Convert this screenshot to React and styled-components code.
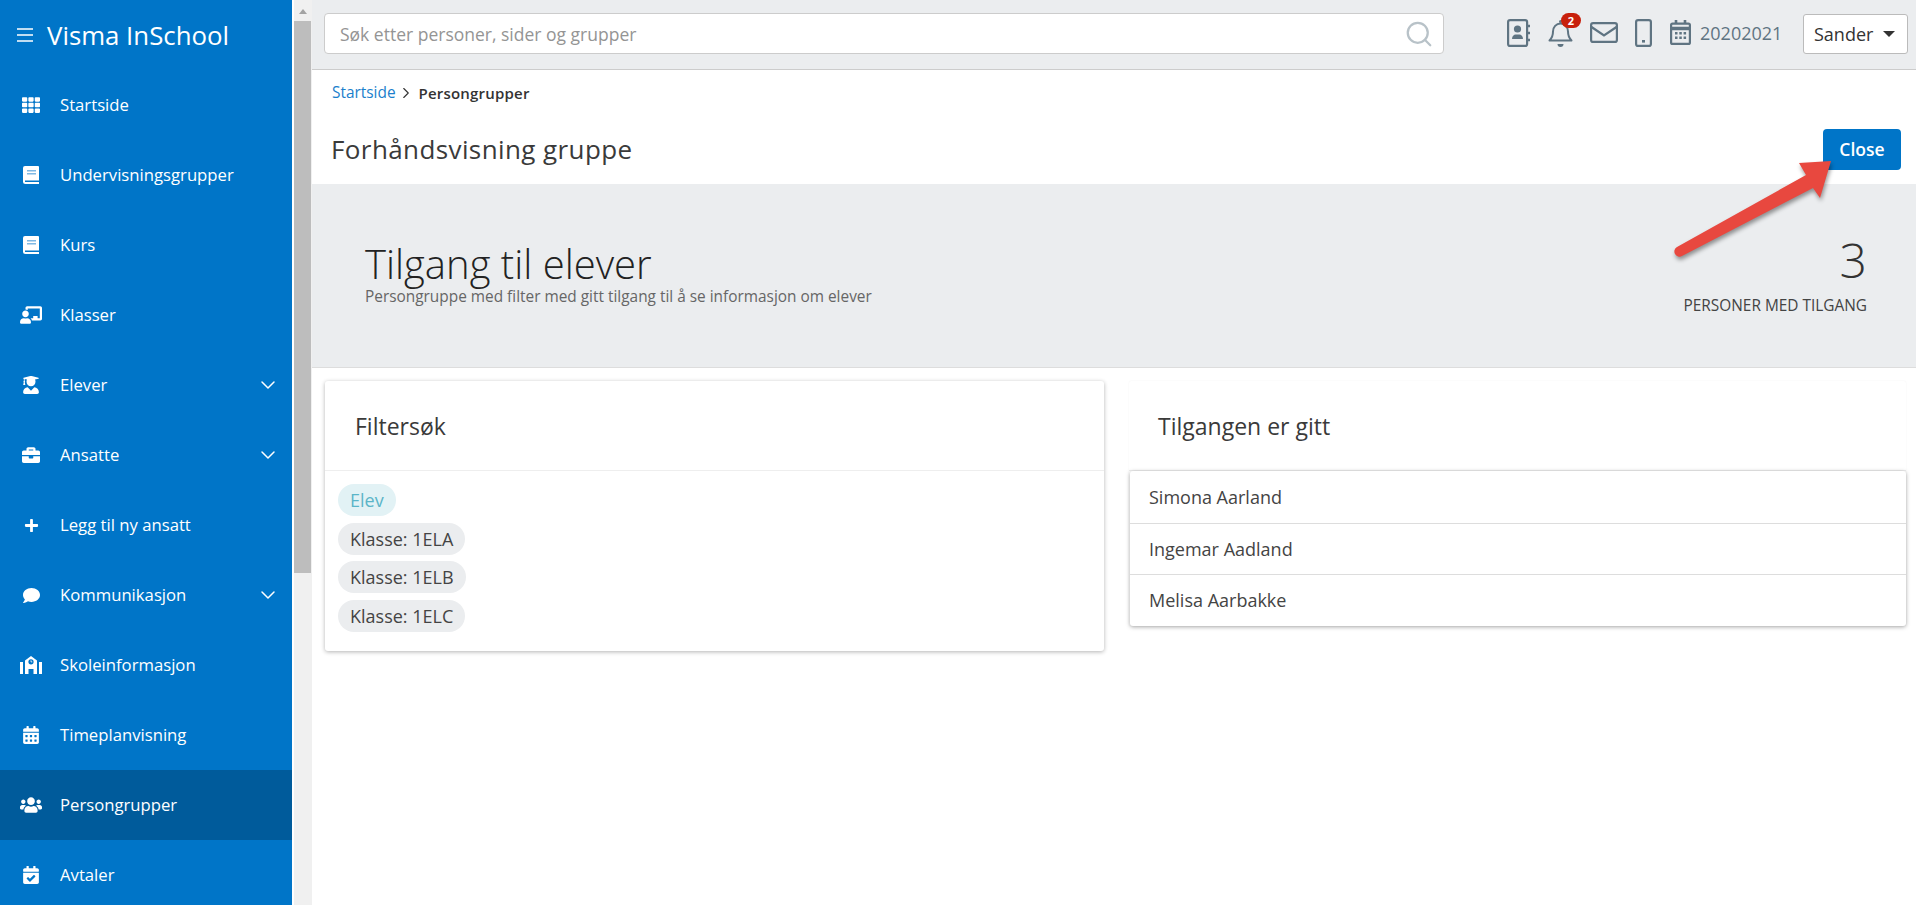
import React from "react";
import styled, { createGlobalStyle } from "styled-components";
import {
  FaTh,
  FaChalkboardTeacher,
  FaUserGraduate,
  FaBriefcase,
  FaPlus,
  FaComment,
  FaCalendarAlt,
  FaUsers,
  FaCalendarCheck,
} from "react-icons/fa";
import { ChevronDown, ChevronRight, Search } from "lucide-react";

const BookIcon = () => (
  <svg width="16" height="18" viewBox="0 0 16 18">
    <path fill="#fff" d="M2 0h13a1 1 0 0 1 1 1v17H2.500A2.500 2.500 0 0 1 0 15.500V2a2 2 0 0 1 2-2z" />
    <rect x="4" y="4" width="9" height="1.500" fill="#7fb8e3" />
    <rect x="4" y="7" width="9" height="1.500" fill="#7fb8e3" />
    <rect x="2" y="14.500" width="14" height="1.500" fill="#0075c8" />
  </svg>
);

const SchoolIcon = () => (
  <svg width="22" height="18" viewBox="0 0 22 18">
    <path fill="#fff" d="M0 6h3v12H0zM19 6h3v12h-3z" />
    <path
      fill="#fff"
      fillRule="evenodd"
      d="M11 0l6 4.500V18h-3.500v-5h-5v5H5V4.500zM11 3.200a2.600 2.600 0 1 0 0 5.200 2.600 2.600 0 0 0 0-5.200z"
    />
    <path stroke="#fff" strokeWidth="0.800" fill="none" d="M11 4.300v1.600h1.300" />
  </svg>
);

const HamburgerIcon = () => (
  <svg width="16" height="14" viewBox="0 0 16 14" stroke="#fff" strokeWidth="1.500">
    <path d="M0 1h16M0 7h16M0 13h16" />
  </svg>
);

const AddressBookIcon = () => (
  <svg width="24" height="28" viewBox="0 0 24 28" fill="none" stroke="#5f7482" strokeWidth="2.200">
    <rect x="1.100" y="1.100" width="19" height="25.800" rx="2" />
    <path d="M20 7h3M20 14h3M20 21h3" strokeWidth="2.400" />
    <circle cx="10.500" cy="10" r="3.600" fill="#5f7482" stroke="none" />
    <path fill="#5f7482" stroke="none" d="M5 20c0-3 2-4.500 3.500-4.500h4c1.500 0 3.500 1.500 3.500 4.500z" />
  </svg>
);

const BellIcon = () => (
  <svg width="25" height="28" viewBox="0 0 25 28" fill="none" stroke="#5f7482" strokeWidth="2">
    <path d="M1.500 21.500c2-2 3.500-3.500 3.500-9 0-4.500 3.200-8 7.500-8s7.500 3.500 7.500 8c0 5.500 1.500 7 3.500 9z" strokeLinejoin="round" />
    <path d="M9.500 25h6a3 3 0 0 1-6 0z" fill="#5f7482" stroke="none" />
    <rect x="11" y="1" width="3" height="3" rx="1.500" fill="#5f7482" stroke="none" />
  </svg>
);

const EnvelopeIcon = () => (
  <svg width="28" height="21" viewBox="0 0 28 21" fill="none" stroke="#5f7482" strokeWidth="2.200">
    <rect x="1.100" y="1.100" width="25.800" height="18.800" rx="2" />
    <path d="M1.500 5l12.500 8.500L26.500 5" />
  </svg>
);

const PhoneIcon = () => (
  <svg width="17" height="28" viewBox="0 0 17 28" fill="none" stroke="#5f7482" strokeWidth="2.200">
    <rect x="1.100" y="1.100" width="14.800" height="25.800" rx="2" />
    <rect x="7" y="21" width="3" height="2.600" fill="#5f7482" stroke="none" />
  </svg>
);

const CalendarIcon = () => (
  <svg width="21" height="25" viewBox="0 0 21 25" fill="none" stroke="#5f7482" strokeWidth="2.200">
    <rect x="1.100" y="3.600" width="18.800" height="20.300" rx="1.500" />
    <path d="M1 8.500h19" strokeWidth="3.500" />
    <path d="M6 0v4M15 0v4" strokeWidth="2.600" />
    <path
      fill="#5f7482"
      stroke="none"
      d="M5 12h2.500v2.500H5zM9.300 12h2.500v2.500H9.300zM13.600 12h2.500v2.500h-2.500zM5 16.500h2.500V19H5zM9.300 16.500h2.500V19H9.300zM13.600 16.500h2.500V19h-2.500z"
    />
  </svg>
);

const navItems = [
  { label: "Startside", icon: <FaTh size={18} /> },
  { label: "Undervisningsgrupper", icon: <BookIcon /> },
  { label: "Kurs", icon: <BookIcon /> },
  { label: "Klasser", icon: <FaChalkboardTeacher size={22} /> },
  { label: "Elever", icon: <FaUserGraduate size={18} />, expandable: true },
  { label: "Ansatte", icon: <FaBriefcase size={18} />, expandable: true },
  { label: "Legg til ny ansatt", icon: <FaPlus size={15} /> },
  { label: "Kommunikasjon", icon: <FaComment size={17} />, expandable: true },
  { label: "Skoleinformasjon", icon: <SchoolIcon /> },
  { label: "Timeplanvisning", icon: <FaCalendarAlt size={18} /> },
  { label: "Persongrupper", icon: <FaUsers size={22} />, active: true },
  { label: "Avtaler", icon: <FaCalendarCheck size={18} /> },
];

const filters = [
  { label: "Elev", info: true },
  { label: "Klasse: 1ELA" },
  { label: "Klasse: 1ELB" },
  { label: "Klasse: 1ELC" },
];

const people = ["Simona Aarland", "Ingemar Aadland", "Melisa Aarbakke"];

const App = () => {
  return (
    <Page>
      <GlobalStyle />
      <Sidebar>
        <Brand>
          <HamburgerIcon />
          <BrandName>Visma InSchool</BrandName>
        </Brand>
        {navItems.map((item) => (
          <NavItem key={item.label} $active={item.active}>
            <NavIcon>{item.icon}</NavIcon>
            <NavLabel>{item.label}</NavLabel>
            {item.expandable && <ChevronDown size={24} strokeWidth={1.5} />}
          </NavItem>
        ))}
      </Sidebar>
      <ScrollRail>
        <ScrollUp />
        <ScrollThumb />
      </ScrollRail>
      <Main>
        <TopBar>
          <SearchBox>
            <SearchText>Søk etter personer, sider og grupper</SearchText>
            <Search size={30} strokeWidth={1.8} color="#b8c2c8" />
          </SearchBox>
          <TopIcons>
            <AddressBookIcon />
            <BellWrap>
              <BellIcon />
              <Badge>2</Badge>
            </BellWrap>
            <EnvelopeIcon />
            <PhoneIcon />
            <YearBox>
              <CalendarIcon />
              <YearText>20202021</YearText>
            </YearBox>
          </TopIcons>
          <UserButton>
            Sander
            <Caret />
          </UserButton>
        </TopBar>
        <Breadcrumbs>
          <CrumbLink>Startside</CrumbLink>
          <ChevronRight size={18} strokeWidth={1.5} color="#333" />
          <CrumbCurrent>Persongrupper</CrumbCurrent>
        </Breadcrumbs>
        <TitleRow>
          <PageTitle>Forhåndsvisning gruppe</PageTitle>
          <CloseButton>Close</CloseButton>
        </TitleRow>
        <Hero>
          <HeroHeading>
            <HeroTitle>Tilgang til elever</HeroTitle>
            <HeroText>Persongruppe med filter med gitt tilgang til å se informasjon om elever</HeroText>
          </HeroHeading>
          <HeroStat>
            <StatNumber>3</StatNumber>
            <StatLabel>PERSONER MED TILGANG</StatLabel>
          </HeroStat>
        </Hero>
        <Cards>
          <Card>
            <CardHeader $inset={30}>Filtersøk</CardHeader>
            <Chips>
              {filters.map((f) => (
                <Chip key={f.label} $info={f.info}>
                  {f.label}
                </Chip>
              ))}
            </Chips>
          </Card>
          <AccessCard>
            <CardHeader $inset={29}>Tilgangen er gitt</CardHeader>
            <PeopleList>
              {people.map((name) => (
                <Person key={name}>{name}</Person>
              ))}
            </PeopleList>
          </AccessCard>
        </Cards>
        <Arrow width="180" height="115" viewBox="0 0 180 115">
          <path
            fill="#e8483f"
            d="M171 11L139 13 146 25 17 97a5 5 0 0 0 5 9L153 38 160 48z"
            filter="drop-shadow(1px 3px 2px rgba(0,0,0,.4))"
          />
        </Arrow>
      </Main>
    </Page>
  );
};

export default App;

const GlobalStyle = createGlobalStyle`
  html, body {
    margin: 0;
    height: 100%;
    overflow: hidden;
    background: #fff;
    font-family: "Open Sans", sans-serif;
    color: #333;
  }
`;

const Page = styled.div`
  display: flex;
  height: 905px;
  overflow: hidden;
`;

const Sidebar = styled.nav`
  width: 292px;
  flex: none;
  background: #0075c8;
  color: #fff;
`;

const Brand = styled.div`
  display: flex;
  align-items: center;
  gap: 14px;
  height: 70px;
  padding-left: 17px;
`;

const BrandName = styled.span`
  font-size: 25.800px;
  font-weight: 500;
`;

const NavItem = styled.div`
  display: flex;
  align-items: center;
  height: 70px;
  padding-right: 12px;
  background: ${(p) => (p.$active ? "#005b9b" : "transparent")};
`;

const NavIcon = styled.span`
  display: flex;
  justify-content: center;
  width: 62px;
  flex: none;
  margin-right: -2px;
`;

const NavLabel = styled.span`
  flex: 1;
  margin-bottom: 2px;
  font-size: 16.700px;
  font-weight: 500;
`;

const ScrollRail = styled.div`
  width: 18px;
  flex: none;
  margin-left: 2px;
  background: #f0f0f0;
`;

const ScrollUp = styled.div`
  width: 0;
  height: 0;
  margin: 9px auto 0;
  border-left: 4px solid transparent;
  border-right: 4px solid transparent;
  border-bottom: 5px solid #a3a3a3;
`;

const ScrollThumb = styled.div`
  height: 552px;
  margin-top: 7px;
  background: #bdbdbd;
  width: 17px;
`;

const Main = styled.main`
  flex: 1;
  min-width: 0;
  position: relative;
`;

const TopBar = styled.header`
  display: flex;
  align-items: center;
  height: 69px;
  padding: 0 8px 0 12px;
  background: #ebedef;
  border-bottom: 1px solid #ccc;
`;

const SearchBox = styled.div`
  display: flex;
  align-items: center;
  justify-content: space-between;
  width: 1120px;
  height: 41px;
  margin-top: -2px;
  padding: 0 9px 0 15px;
  box-sizing: border-box;
  background: #fff;
  border: 1px solid #ccc;
  border-radius: 4px;
`;

const SearchText = styled.span`
  font-size: 17.500px;
  color: #949494;
`;

const TopIcons = styled.div`
  display: flex;
  align-items: center;
  gap: 17px;
  margin-left: 63px;
  margin-top: -4px;
`;

const BellWrap = styled.span`
  position: relative;
  display: flex;
`;

const Badge = styled.span`
  position: absolute;
  top: -6px;
  left: 13px;
  width: 20px;
  height: 15px;
  border-radius: 8px;
  background: #c8200c;
  color: #fff;
  font-size: 11px;
  font-weight: 700;
  line-height: 15px;
  text-align: center;
`;

const YearBox = styled.span`
  display: flex;
  align-items: center;
  gap: 9px;
  margin-left: 1px;
`;

const YearText = styled.span`
  font-size: 18px;
  font-weight: 500;
  color: #5f7482;
`;

const UserButton = styled.button`
  display: flex;
  align-items: center;
  justify-content: space-between;
  width: 105px;
  height: 40px;
  margin-left: auto;
  margin-top: -2px;
  padding: 0 12px 0 10px;
  box-sizing: border-box;
  background: #fff;
  border: 1px solid #bbb;
  border-radius: 3px;
  font-family: "Open Sans", sans-serif;
  font-size: 18px;
  font-weight: 400;
  color: #333;
`;

const Caret = styled.span`
  width: 0;
  height: 0;
  border-left: 6px solid transparent;
  border-right: 6px solid transparent;
  border-top: 6px solid #333;
`;

const Breadcrumbs = styled.div`
  display: flex;
  align-items: center;
  gap: 1px;
  height: 45px;
  padding-left: 20px;
  font-size: 15.400px;
`;

const CrumbLink = styled.span`
  color: #1b7fcc;
`;

const CrumbCurrent = styled.span`
  margin-left: 3px;
  font-size: 15px;
  font-weight: 600;
  letter-spacing: 0.200px;
  color: #333;
`;

const TitleRow = styled.div`
  display: flex;
  align-items: center;
  justify-content: space-between;
  height: 69px;
  padding: 0 15px 0 19px;
`;

const PageTitle = styled.h1`
  margin: 0 0 2px;
  font-size: 26px;
  font-weight: 400;
  letter-spacing: 0.400px;
  color: #3a3a3a;
`;

const CloseButton = styled.button`
  width: 78px;
  height: 41px;
  margin-bottom: 1px;
  background: #0075c8;
  border: none;
  border-radius: 4px;
  color: #fff;
  font-family: "Open Sans", sans-serif;
  font-size: 17.500px;
  font-weight: 600;
`;

const Hero = styled.section`
  display: flex;
  align-items: center;
  justify-content: space-between;
  height: 183px;
  padding: 0 49px 0 53px;
  background: #ebedef;
  border-bottom: 1px solid #ddd;
`;

const HeroHeading = styled.div`
  margin-top: -4px;
`;

const HeroTitle = styled.h2`
  margin: 0;
  font-size: 40px;
  font-weight: 300;
  line-height: 46px;
  color: #222;
`;

const HeroText = styled.p`
  margin: 0;
  font-size: 15.400px;
  line-height: 20px;
  color: #666;
`;

const HeroStat = styled.div`
  margin-top: -4px;
  text-align: right;
`;

const StatNumber = styled.div`
  font-size: 48px;
  font-weight: 300;
  line-height: 58px;
  color: #333;
`;

const StatLabel = styled.div`
  margin-top: 6px;
  font-size: 15.400px;
  color: #444;
`;

const Cards = styled.div`
  display: grid;
  grid-template-columns: 779px 777px;
  gap: 25px;
  align-items: start;
  padding: 13px 10px 0 13px;
`;

const Card = styled.article`
  background: #fff;
  border-radius: 3px;
  box-shadow: 0 1px 4px rgba(0, 0, 0, 0.3);
`;

const AccessCard = styled(Card)`
  height: 245px;
  box-shadow: 0 0 2px rgba(0, 0, 0, 0.06);
`;

const CardHeader = styled.h3`
  display: flex;
  align-items: center;
  height: 89px;
  margin: 0;
  padding-left: ${(p) => p.$inset}px;
  font-size: 23px;
  font-weight: 400;
  color: #3a3a3a;
  border-bottom: 1px solid #eee;
`;

const Chips = styled.div`
  display: flex;
  flex-direction: column;
  align-items: flex-start;
  gap: 6.500px;
  padding: 13px 13px 19px;
`;

const Chip = styled.span`
  height: 32px;
  padding: 0 12px;
  border-radius: 16px;
  background: ${(p) => (p.$info ? "#e2f2f5" : "#ebedef")};
  color: ${(p) => (p.$info ? "#5bb5c8" : "#444")};
  font-size: 18px;
  line-height: 32px;
`;

const PeopleList = styled.ul`
  list-style: none;
  margin: 0 0 0 1px;
  padding: 0;
  border-radius: 3px;
  background: #fff;
  box-shadow: 0 1px 4px rgba(0, 0, 0, 0.35);
`;

const Person = styled.li`
  display: flex;
  align-items: center;
  box-sizing: border-box;
  height: 51.500px;
  padding-left: 19px;
  font-size: 18px;
  color: #444;
  & + & {
    border-top: 1px solid #ddd;
  }
`;

const Arrow = styled.svg`
  position: absolute;
  left: 1348px;
  top: 150px;
  overflow: visible;
`;
